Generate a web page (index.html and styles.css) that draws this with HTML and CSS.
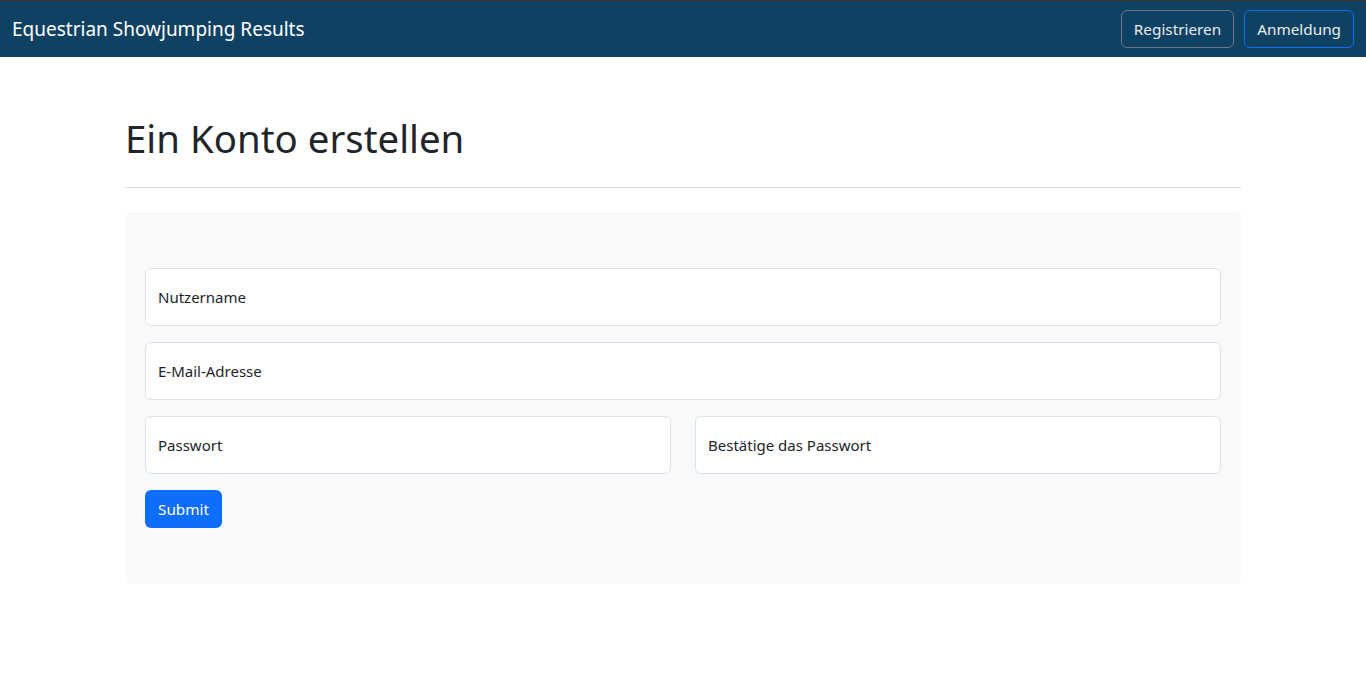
FILE: index.html
```html
<!DOCTYPE html>
<html lang="de">
<head>
<meta charset="utf-8">
<title>Ein Konto erstellen</title>
<link rel="stylesheet" href="styles.css">
</head>
<body>
<nav class="navbar">
  <a class="brand" href="#">Equestrian Showjumping Results</a>
  <div class="nav-actions">
    <a class="btn btn-outline-secondary" href="#">Registrieren</a>
    <a class="btn btn-outline-primary" href="#">Anmeldung</a>
  </div>
</nav>
<main class="container">
  <h1 class="title">Ein Konto erstellen</h1>
  <hr class="divider">
  <section class="card">
    <form class="form">
      <input class="field" type="text" placeholder="Nutzername">
      <input class="field" type="email" placeholder="E-Mail-Adresse">
      <div class="row">
        <input class="field" type="password" placeholder="Passwort">
        <input class="field" type="password" placeholder="Bestätige das Passwort">
      </div>
      <div><button class="btn-submit" type="button">Submit</button></div>
    </form>
  </section>
</main>
</body>
</html>
```
FILE: styles.css
```css
* { box-sizing: border-box; }
body {
  margin: 0;
  font-family: "Noto Sans", "Liberation Sans", sans-serif;
  color: #212529;
  background: #fff;
}
.navbar {
  height: 57px;
  background: #0f4162;
  border-top: 1px solid #3a3530;
  display: flex;
  align-items: center;
  justify-content: space-between;
  padding: 0 12px;
}
.brand {
  color: #fff;
  font-size: 19px;
  text-decoration: none;
}
.nav-actions {
  display: flex;
  gap: 10px;
}
.btn {
  display: inline-flex;
  align-items: center;
  height: 38px;
  padding: 0 12px;
  border-radius: 6px;
  font-size: 15.3px;
  color: #e9ecef;
  text-decoration: none;
  border: 1px solid #6c757d;
}
.btn-outline-primary { border-color: #0d6efd; }
.container {
  width: 1116px;
  margin: 0 auto;
}
.title {
  font-size: 38.4px;
  font-weight: 400;
  line-height: 1.25;
  margin: 57px 0 0;
}
.divider {
  border: 0;
  border-top: 1px solid #dcdcdc;
  margin: 25px 0 24px;
}
.card {
  background: #f8f9fa;
  border-radius: 6px;
  padding: 56px 20px;
}
.form {
  display: flex;
  flex-direction: column;
  gap: 16px;
}
.row {
  display: grid;
  grid-template-columns: 1fr 1fr;
  gap: 24px;
}
.field {
  height: 58px;
  width: 100%;
  border: 1px solid #dee2e6;
  border-radius: 6px;
  background: #fff;
  padding: 0 12px;
  font-family: inherit;
  font-size: 15px;
  color: #212529;
}
.field::placeholder { color: #212529; opacity: 1; }
.btn-submit {
  height: 38px;
  padding: 0 13px;
  background: #0d6efd;
  color: #fff;
  border: 0;
  border-radius: 6px;
  font-family: inherit;
  font-size: 15.3px;
}
```
